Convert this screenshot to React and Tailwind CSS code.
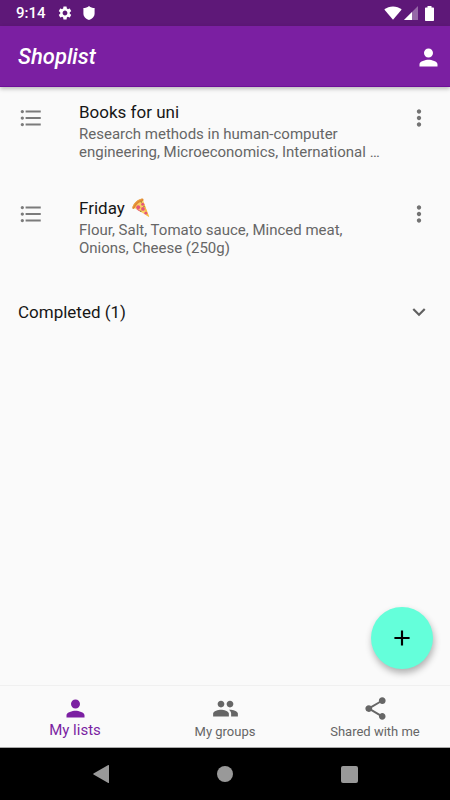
import { MdPerson, MdFormatListBulleted, MdMoreVert, MdExpandMore, MdAdd, MdPeople, MdShare, MdSettings } from "react-icons/md";

function StatusBar() {
  return (
    <div className="flex h-[26px] items-center bg-[#5e1878] pl-4 pr-[14px] text-white">
      <span className="w-[41px] text-[15px] leading-[26px] font-medium">9:14</span>
      <MdSettings className="size-4" aria-hidden="true" />
      <svg className="ml-[10px] h-[14px] w-3" viewBox="0 0 12 14" fill="currentColor" aria-hidden="true">
        <path d="M6 0C7.600 1.500 9.500 2 11.600 2V7.500C11.600 10.500 9.300 13 6 14C2.700 13 .4 10.500 .4 7.500V2C2.500 2 4.400 1.500 6 0Z" />
      </svg>
      <svg className="ml-auto h-[14px] w-[18px]" viewBox="0 0 18 14" fill="currentColor" aria-hidden="true">
        <path d="M.3 3.600C2.800 1.500 5.800.4 9 .4C12.200.4 15.200 1.500 17.700 3.600L9 13.800Z" />
      </svg>
      <svg className="ml-[2px] size-[14px]" viewBox="0 0 14 14" fill="currentColor" aria-hidden="true">
        <path d="M14 0V14H0Z" opacity="0.35" />
        <path d="M8 6V14H0Z" />
      </svg>
      <svg className="ml-[7px] mr-[2px] h-[15px] w-[9px]" viewBox="0 0 9 15" fill="currentColor" aria-hidden="true">
        <path d="M2.500 0H6.500V1.500H8C8.600 1.500 9 1.900 9 2.500V14C9 14.600 8.600 15 8 15H1C.4 15 0 14.600 0 14V2.500C0 1.900.4 1.500 1 1.500H2.500Z" />
      </svg>
    </div>
  );
}

function Pizza() {
  return (
    <svg className="size-5" viewBox="0 0 20 20" role="img" aria-label="pizza">
      <path d="M2.500 9.500C4.500 5.500 7.500 3 12 2L18.200 19Z" fill="#fbd065" />
      <path d="M1.200 9.800C2.600 5 6.500 1.300 11.200.4C12.400.2 13.200 2 12 2.900C8.300 3.900 5.200 6.400 3.600 10.300C2.800 11.500 1 11 1.200 9.800Z" fill="#df8a32" />
      <path d="M2 8.800C3.500 4.800 6.700 2 10.800 1" fill="none" stroke="#f0a84a" strokeWidth=".8" />
      <path d="M12.500 4L18.200 19L15.500 17.500L13.800 11Z" fill="#f7bb45" />
      <g fill="#e5567a">
        <circle cx="7.200" cy="9.300" r="2" />
        <circle cx="11.700" cy="6.200" r="1.500" />
        <circle cx="12" cy="10.900" r="1.900" />
        <circle cx="14.800" cy="15.200" r="1.400" />
        <path d="M5.600 11.500C7.500 11 9 12 8.900 13.500Z" />
      </g>
      <g fill="#8b7d36">
        <circle cx="10.300" cy="4" r=".7" />
        <circle cx="13" cy="8.500" r=".7" />
        <circle cx="9.800" cy="13.300" r=".8" />
      </g>
    </svg>
  );
}

function ListRow({ title, emoji, children }) {
  return (
    <li className="flex h-24 items-start px-[18px] pt-[14px]">
      <MdFormatListBulleted className="mt-1 size-[26px] shrink-0 text-[#7b7b7b]" aria-hidden="true" />
      <div className="ml-[35px] min-w-0 flex-1">
        <h2 className="flex items-center gap-1.5 text-[17px] leading-[22px] text-[#161616]">
          {title}
          {emoji}
        </h2>
        <p className="mt-[2px] text-[15px] leading-[18px] text-[#666666]">{children}</p>
      </div>
      <button type="button" aria-label={"Options for " + title} className="ml-2 mt-1 shrink-0 text-[#737373]">
        <MdMoreVert className="size-[26px]" />
      </button>
    </li>
  );
}

export default function App() {
  return (
    <div className="flex min-h-screen flex-col bg-[#fafafa] font-[Roboto,sans-serif]">
      <StatusBar />
      <header className="flex h-[61px] items-center justify-between border-b border-[#6d0f98] bg-[#7b1fa2] pl-[18px] pr-2 pt-[2px] text-white shadow-[0_2px_4px_rgba(0,0,0,0.25)]">
        <h1 className="text-[22px] leading-7 font-medium italic">Shoplist</h1>
        <button type="button" aria-label="Account">
          <MdPerson className="size-[27px]" />
        </button>
      </header>

      <main className="flex flex-1 flex-col">
        <ul>
          <ListRow title="Books for uni">
            Research methods in human-computer
            <br />
            engineering, Microeconomics, International …
          </ListRow>
          <ListRow title="Friday" emoji={<Pizza />}>
            Flour, Salt, Tomato sauce, Minced meat,
            <br />
            Onions, Cheese (250g)
          </ListRow>
        </ul>
        <button type="button" className="flex h-[66px] w-full items-center justify-between px-[18px] text-[17px] leading-[22px] text-[#161616]">
          Completed (1)
          <MdExpandMore className="size-[26px] text-[#606060]" aria-hidden="true" />
        </button>
        <div className="mt-auto flex justify-end pb-4 pr-[17px]">
          <button type="button" aria-label="Add list" className="flex size-[62px] items-center justify-center rounded-full bg-[#64ffda] text-black shadow-[1px_4px_7px_rgba(0,0,0,0.3)]">
            <MdAdd className="size-[26px]" />
          </button>
        </div>
      </main>

      <nav className="grid h-[63px] grid-cols-3 border-y border-t-[#f0f0f0] border-b-[#a8a8a8] text-[#666666]">
        <a href="#lists" className="flex flex-col items-center pt-[9px] text-[15px] leading-4 text-[#7b1fa2]">
          <MdPerson className="size-[27px]" aria-hidden="true" />
          My lists
        </a>
        <a href="#groups" className="flex flex-col items-center pt-[9px] text-[13px] leading-5">
          <MdPeople className="size-[27px]" aria-hidden="true" />
          My groups
        </a>
        <a href="#shared" className="flex flex-col items-center pt-[9px] text-[13px] leading-5">
          <MdShare className="size-[27px]" aria-hidden="true" />
          Shared with me
        </a>
      </nav>

      <footer className="flex h-[52px] items-center justify-center gap-[108px] bg-black text-[#999999]">
        <button type="button" aria-label="Back">
          <svg className="h-[18px] w-4" viewBox="0 0 16 18" fill="currentColor">
            <path d="M15.300.1C15.700-.1 16 .2 16 .6V17.400C16 17.800 15.700 18.100 15.300 17.900L.5 9.500C.1 9.300.1 8.700.5 8.500Z" />
          </svg>
        </button>
        <button type="button" aria-label="Home" className="size-4 rounded-full bg-[#999999]" />
        <button type="button" aria-label="Recent apps" className="size-[17px] rounded-[2px] bg-[#999999]" />
      </footer>
    </div>
  );
}
